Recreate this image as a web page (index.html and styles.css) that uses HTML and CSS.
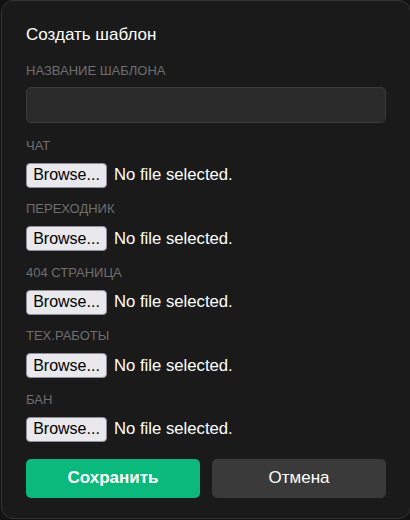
FILE: index.html
```html
<!DOCTYPE html>
<html lang="ru">
<head>
<meta charset="utf-8">
<link rel="stylesheet" href="styles.css">
</head>
<body>
<div class="modal">
  <h2 class="title">Создать шаблон</h2>
  <label class="label label-first">НАЗВАНИЕ ШАБЛОНА</label>
  <div class="text-input"></div>
  <div class="group group-first">
    <div class="label">ЧАТ</div>
    <div class="file"><span class="browse">Browse...</span><span class="nofile">No file selected.</span></div>
  </div>
  <div class="group">
    <div class="label">ПЕРЕХОДНИК</div>
    <div class="file"><span class="browse">Browse...</span><span class="nofile">No file selected.</span></div>
  </div>
  <div class="group">
    <div class="label">404 СТРАНИЦА</div>
    <div class="file"><span class="browse">Browse...</span><span class="nofile">No file selected.</span></div>
  </div>
  <div class="group">
    <div class="label">ТЕХ.РАБОТЫ</div>
    <div class="file"><span class="browse">Browse...</span><span class="nofile">No file selected.</span></div>
  </div>
  <div class="group">
    <div class="label">БАН</div>
    <div class="file"><span class="browse">Browse...</span><span class="nofile">No file selected.</span></div>
  </div>
  <div class="actions">
    <button class="btn btn-save">Сохранить</button>
    <button class="btn btn-cancel">Отмена</button>
  </div>
</div>
</body>
</html>
```
FILE: styles.css
```css
html, body {
  margin: 0;
  padding: 0;
  background: #121212;
  overflow: hidden;
}
body {
  font-family: "Liberation Sans", Arial, sans-serif;
  width: 410px;
  height: 520px;
}
.modal {
  box-sizing: border-box;
  width: 410px;
  margin-left: 1px;
  padding: 25px 24px 20px 24px;
  background: #1a1a1a;
  border: 1px solid #333;
  border-radius: 12px;
  display: flex;
  flex-direction: column;
}
.title {
  margin: 0;
  font-size: 17px;
  font-weight: normal;
  line-height: 18px;
  color: #fff;
}
.label {
  display: block;
  font-size: 13px;
  line-height: 14px;
  color: #6f6f6f;
}
.label-first {
  margin-top: 20px;
}
.text-input {
  margin-top: 9px;
  width: 360px;
  height: 36px;
  box-sizing: border-box;
  background: #2a2a2a;
  border: 1px solid #3b3b3b;
  border-radius: 5px;
}
.group {
  margin-top: 14.5px;
  display: flex;
  flex-direction: column;
  gap: 10px;
}
.group-first {
  margin-top: 15.5px;
}
.file {
  display: flex;
  align-items: center;
  height: 25px;
  font-size: 16px;
}
.browse {
  box-sizing: border-box;
  height: 25px;
  width: 81px;
  display: flex;
  align-items: center;
  justify-content: center;
  background: #e9e9ed;
  color: #000;
  border: 1px solid #8f8f9d;
  border-radius: 4px;
}
.nofile {
  margin-left: 7px;
  font-size: 16.7px;
  color: #fff;
}
.actions {
  margin-top: 17px;
  display: flex;
  gap: 12px;
}
.btn {
  flex: 1;
  height: 39px;
  border: none;
  border-radius: 5px;
  font-family: "Liberation Sans", Arial, sans-serif;
  font-size: 17px;
  color: #fff;
  padding: 0;
}
.btn-save {
  background: #0bb97c;
  font-weight: bold;
}
.btn-cancel {
  background: #3a3a3a;
}
```
